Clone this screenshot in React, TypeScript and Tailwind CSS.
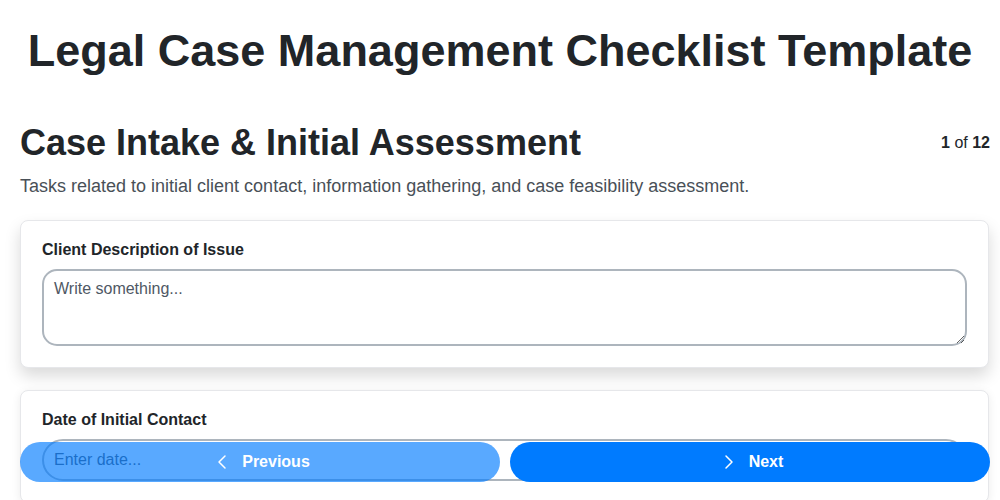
import React from 'react';
import { ChevronLeft, ChevronRight } from 'lucide-react';

function FieldCard({ label, children, raised }: { label: string; children: React.ReactNode; raised?: boolean }) {
  return (
    <div
      className={`bg-white border border-[#e6e7ea] rounded-lg pt-[17px] pb-[21px] px-[21px] ${
        raised ? 'shadow-[0_8px_16px_rgba(0,0,0,0.15)]' : 'shadow-[0_2px_10px_rgba(0,0,0,0.08)]'
      }`}
    >
      <label className="block text-base leading-6 font-bold text-[#212529]">{label}</label>
      <div className="mt-[7px]">{children}</div>
    </div>
  );
}

export default function App() {
  return (
    <div className="min-h-screen bg-white text-[#212529] font-['Liberation_Sans',Arial,sans-serif]">
      <div className="pl-5 pr-[10px] pt-[23px] pb-24">
        <h1 className="mr-[10px] text-center text-[45px] leading-[56px] font-bold">
          Legal Case Management Checklist Template
        </h1>

        {/* Section header */}
        <div className="mt-[42px] flex items-center justify-between">
          <h2 className="text-4xl leading-[44px] font-bold">Case Intake &amp; Initial Assessment</h2>
          <span className="text-base leading-6">
            <b>1</b> of <b>12</b>
          </span>
        </div>
        <p className="mt-[7px] text-lg leading-7 text-[#495057]">
          Tasks related to initial client contact, information gathering, and case feasibility assessment.
        </p>

        <div className="mt-5 mr-[1px] flex flex-col gap-[22px]">
          <FieldCard label="Client Description of Issue" raised>
            <textarea
              placeholder="Write something..."
              className="block w-full h-[77px] border-2 border-[#adb5bd] rounded-[15px] px-2.5 py-1.5 text-base leading-6 text-[#212529] placeholder:text-[#4f5864] outline-none"
            />
          </FieldCard>
          <FieldCard label="Date of Initial Contact">
            <input
              type="text"
              placeholder="Enter date..."
              className="block w-full h-[42px] border-2 border-[#adb5bd] rounded-full px-2.5 text-base text-[#212529] placeholder:text-[#4f5864] outline-none"
            />
          </FieldCard>
        </div>
      </div>

      {/* Fixed navigation */}
      <div className="fixed bottom-[18px] left-5 right-[10px] flex gap-[10px]">
        <button className="flex-1 h-10 rounded-full bg-[#007bff] opacity-65 text-white font-bold text-base flex items-center justify-center gap-2">
          <ChevronLeft size={24} strokeWidth={1.5} />
          Previous
        </button>
        <button className="flex-1 h-10 rounded-full bg-[#007bff] text-white font-bold text-base flex items-center justify-center gap-2">
          <ChevronRight size={24} strokeWidth={1.5} />
          Next
        </button>
      </div>
    </div>
  );
}
